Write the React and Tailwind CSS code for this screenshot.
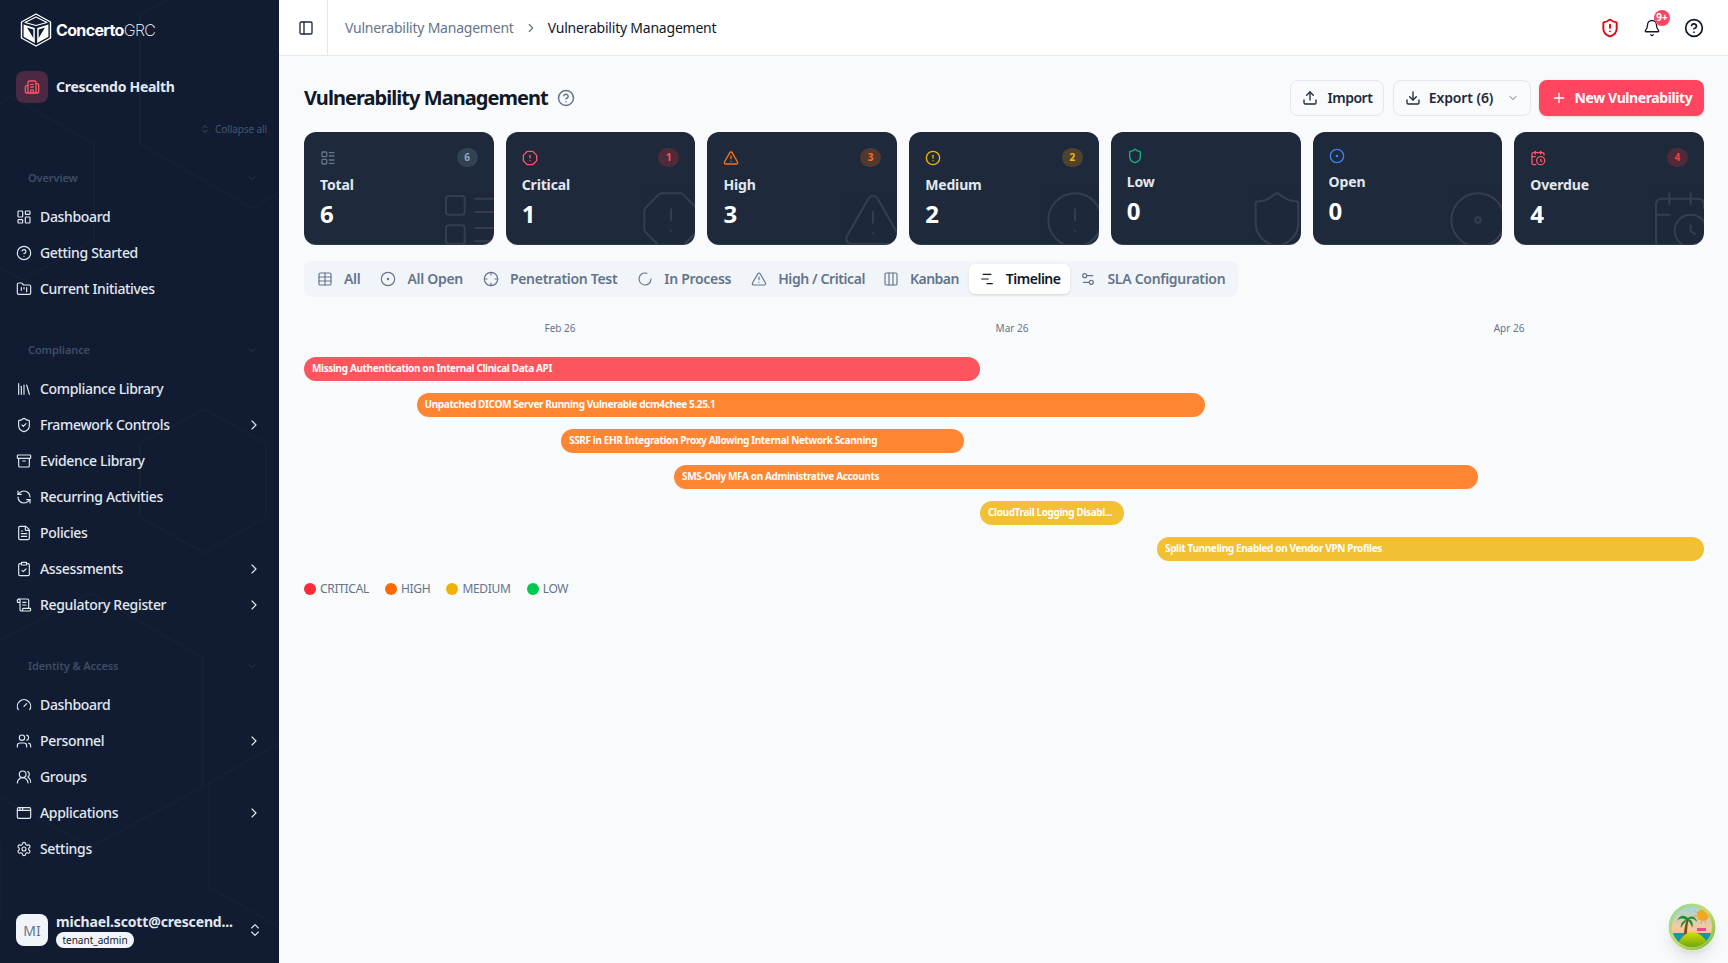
import React from "react";
import {
  LayoutDashboard, CircleHelp, FolderKanban, Library, ShieldCheck, Archive, RefreshCcw, FileText, ClipboardCheck, ScrollText,
  Gauge, Users, UsersRound, AppWindow, Settings, ChevronRight, ChevronDown, ChevronsUpDown, Building2, PanelLeft, ShieldAlert,
  Bell, Upload, Download, Plus, LayoutList, OctagonAlert, TriangleAlert, CircleAlert, Shield, CircleDot, CalendarClock, Table,
  Crosshair, LoaderCircle, Columns3, ChartNoAxesGantt, Settings2,
} from "lucide-react";

const FONT = "font-['Noto_Sans',sans-serif]";

function Logo() {
  return (
    <svg width="32" height="34" viewBox="0 0 32 34" className="shrink-0">
      <path d="M16 1 L30.5 9 V25 L16 33 L1.5 25 V9 Z" fill="none" stroke="#fff" strokeWidth="1.4" strokeLinejoin="round" />
      <path d="M16 4 L27 9.5 L16 12.5 L5 9.5 Z" fill="none" stroke="#fff" strokeWidth="1.1" strokeLinejoin="round" />
      <path d="M3.6 11.5 L14.8 15 L14.8 30 L3.6 23.8 Z" fill="#fff" />
      <path d="M28.4 11.5 L17.2 15 L17.2 30 L28.4 23.8 Z" fill="#fff" />
      <path d="M7 14.5 L13.3 16.6 L13.3 25 Z" fill="#111c33" />
      <path d="M25 14.5 L18.7 16.6 L18.7 25 Z" fill="#111c33" />
    </svg>
  );
}

function Island() {
  return (
    <svg viewBox="0 0 48 48" className="w-full h-full">
      <defs>
        <linearGradient id="sky" x1="0" y1="0" x2="0" y2="1">
          <stop offset="0" stopColor="#8fd8e8" />
          <stop offset="0.55" stopColor="#ffc79a" />
          <stop offset="1" stopColor="#ff9f8a" />
        </linearGradient>
        <linearGradient id="ring" x1="0" y1="0" x2="1" y2="1">
          <stop offset="0" stopColor="#8ed6a0" />
          <stop offset="0.5" stopColor="#c8dc6c" />
          <stop offset="1" stopColor="#6dbb3a" />
        </linearGradient>
        <linearGradient id="hill" x1="0" y1="0" x2="0" y2="1">
          <stop offset="0" stopColor="#d8e000" />
          <stop offset="1" stopColor="#5f9e10" />
        </linearGradient>
        <clipPath id="disc"><circle cx="24" cy="24" r="20" /></clipPath>
      </defs>
      <circle cx="24" cy="24" r="23.5" fill="url(#ring)" />
      <g clipPath="url(#disc)">
        <rect x="0" y="0" width="48" height="48" fill="url(#sky)" />
        <rect x="0" y="30" width="48" height="9" fill="#1597a8" />
        <circle cx="35" cy="12" r="6" fill="#f5a623" />
        <path d="M27 8l3 2M26 13h3M28 18l2-2M33 21l1-3M38 20l-1-2" stroke="#f59b42" strokeWidth="1" />
        <rect x="29" y="25" width="9" height="3" fill="#f0478a" />
        <path d="M16 34 C16 26 17 22 19 16 L21 16 C19 22 19 28 19 34Z" fill="#7a4a1e" />
        <path d="M20 15 C15 11 11 13 9 18 C12 15 15 15 18 17 C14 18 12 22 13 25 C15 21 17 19 20 17 C22 20 24 23 24 25 C26 21 24 17 21 16 C24 15 27 16 29 19 C28 14 24 12 20 15Z" fill="#1f8f2f" />
        <path d="M8 46 C12 33 19 29 24 29 C30 29 38 34 42 46Z" fill="url(#hill)" />
      </g>
    </svg>
  );
}

function SidebarPattern() {
  return (
    <svg className="absolute inset-0 w-full h-full pointer-events-none" viewBox="0 0 279 963" preserveAspectRatio="none" fill="none" stroke="#221f38" strokeWidth="1">
      <path d="M168 0 L140 15 V144 L252 208 L279 193" />
      <path d="M0 104 L10 96 L94 144 V240 L22 280 L0 268" />
      <path d="M204 409 L266 443 V517 L204 553 L140 517 V443 Z" />
      <path d="M0 640 L91 593 L203 658 V787 L90 847 L0 797" />
      <path d="M279 743 L209 783 V887 L279 927" />
      <path d="M0 843 V923" />
    </svg>
  );
}

const nav = [
  { label: "Overview", items: [
    { i: LayoutDashboard, t: "Dashboard" },
    { i: CircleHelp, t: "Getting Started" },
    { i: FolderKanban, t: "Current Initiatives" },
  ]},
  { label: "Compliance", items: [
    { i: Library, t: "Compliance Library" },
    { i: ShieldCheck, t: "Framework Controls", c: true },
    { i: Archive, t: "Evidence Library" },
    { i: RefreshCcw, t: "Recurring Activities" },
    { i: FileText, t: "Policies" },
    { i: ClipboardCheck, t: "Assessments", c: true },
    { i: ScrollText, t: "Regulatory Register", c: true },
  ]},
  { label: "Identity & Access", items: [
    { i: Gauge, t: "Dashboard" },
    { i: Users, t: "Personnel", c: true },
    { i: UsersRound, t: "Groups" },
    { i: AppWindow, t: "Applications", c: true },
    { i: Settings, t: "Settings" },
  ]},
];

function Sidebar() {
  return (
    <aside className="relative w-[279px] shrink-0 h-full bg-[#111c33] flex flex-col overflow-hidden">
      <SidebarPattern />
      <div className="relative flex flex-col h-full">
        <div className="h-[60px] flex items-center pl-[20px] gap-[4px]">
          <Logo />
          <span className="text-white text-[16px] font-['Inter',sans-serif] tracking-[-0.65px]"><span className="font-bold">Concerto</span><span className="font-extralight">GRC</span></span>
        </div>
        <div className="mt-[11px] h-[32px] flex items-center pl-[16px] gap-[8px]">
          <div className="w-[32px] h-[32px] rounded-lg bg-[#4a2a42] flex items-center justify-center">
            <Building2 size={16} className="text-[#fb5565]" />
          </div>
          <span className="text-[#e2e8f0] text-[14px] font-bold tracking-[-0.28px] pb-[2px]">Crescendo Health</span>
        </div>
        <div className="mt-[18px] h-[16px] flex items-center justify-end pr-[12px] gap-[4px] text-[#475569]">
          <ChevronsUpDown size={10} />
          <span className="text-[10px] tracking-[-0.1px] pl-[1px]">Collapse all</span>
        </div>
        <div className="mt-[27px] flex flex-col gap-[29px]">
          {nav.map((s) => (
            <section key={s.label}>
              <div className="h-[28px] mb-[7px] flex items-center justify-between pl-[28px] pr-[21px] text-[#3f4c63]">
                <span className="text-[11px] font-semibold tracking-[-0.1px]">{s.label}</span>
                <ChevronDown size={12} className="text-[#2f3b50]" />
              </div>
              {s.items.map((it) => (
                <div key={it.t + s.label} className="h-[36px] flex items-center pl-[16px] pr-[17px] text-[#e2e8f0]">
                  <it.i size={16} strokeWidth={1.75} className="shrink-0 text-[#e2e8f0]" />
                  <span className="ml-[8px] text-[14px] font-medium tracking-[-0.33px] flex-1 pb-[1px]">{it.t}</span>
                  {it.c && <ChevronRight size={16} strokeWidth={1.75} className="text-[#e2e8f0]" />}
                </div>
              ))}
            </section>
          ))}
        </div>
        <div className="mt-auto pb-[15px] pl-[16px] pr-[16px] flex items-center">
          <div className="w-[32px] h-[32px] rounded-lg bg-[#f1f5f9] flex items-center justify-center text-[#64748b] text-[14px] shrink-0">MI</div>
          <div className="ml-[8px] flex-1 min-w-0 pt-[2px]">
            <div className="text-[#e2e8f0] text-[14px] font-bold leading-[16px] whitespace-nowrap tracking-[-0.15px]">michael.scott@crescend...</div>
            <div className="mt-[2px] w-[78px] h-[16px] rounded-full bg-[#f1f5f9] text-[#111827] text-[10px] leading-[16px] text-center whitespace-nowrap">tenant_admin</div>
          </div>
          <ChevronsUpDown size={16} strokeWidth={1.75} className="text-[#e2e8f0] shrink-0" />
        </div>
      </div>
    </aside>
  );
}

function Header() {
  return (
    <header className="h-[56px] shrink-0 bg-white border-b border-[#e2e8f0] flex items-center">
      <div className="w-[49px] h-full border-r border-[#e2e8f0] flex items-center justify-center">
        <PanelLeft size={16} className="text-[#1e293b] ml-[5px] mr-0" />
      </div>
      <div className="ml-[17px] flex items-center text-[14px] tracking-[-0.22px]">
        <span className="text-[#64748b]">Vulnerability Management</span>
        <ChevronRight size={14} className="text-[#64748b] mx-[10px]" />
        <span className="text-[#0f172a]">Vulnerability Management</span>
      </div>
      <div className="ml-auto flex items-center pr-[24px] text-[#0f172a]">
        <ShieldAlert size={20} strokeWidth={2.25} className="text-[#e7000b]" />
        <div className="relative ml-[23px]">
          <Bell size={18} strokeWidth={1.75} />
          <span className="absolute -top-[9px] left-[11px] w-[16px] h-[16px] rounded-full bg-[#ff4560] text-white text-[10px] font-bold flex items-center justify-center">9+</span>
        </div>
        <CircleHelp size={20} className="ml-[23px]" />
      </div>
    </header>
  );
}

const cards = [
  { t: "Total", v: 6, i: LayoutList, ic: "text-[#64748b]", bb: "bg-[#334155]", bc: "text-[#94a3b8]" },
  { t: "Critical", v: 1, i: OctagonAlert, ic: "text-[#fb5565]", bb: "bg-[#4e2a3a]", bc: "text-[#fb5565]" },
  { t: "High", v: 3, i: TriangleAlert, ic: "text-[#f97316]", bb: "bg-[#51392f]", bc: "text-[#f97316]" },
  { t: "Medium", v: 2, i: CircleAlert, ic: "text-[#f0b100]", bb: "bg-[#4f4230]", bc: "text-[#f5b800]" },
  { t: "Low", v: 0, i: Shield, ic: "text-[#10b981]", nb: true },
  { t: "Open", v: 0, i: CircleDot, ic: "text-[#3b82f6]", nb: true },
  { t: "Overdue", v: 4, i: CalendarClock, ic: "text-[#fb5565]", bb: "bg-[#4e2a3a]", bc: "text-[#ef4444]" },
];

function StatCard({ c }) {
  const I = c.i;
  return (
    <div className="relative overflow-hidden rounded-xl bg-[#1e293b] border-b border-[#475569]/40 h-[113px] px-4 pt-4">
      <I size={64} strokeWidth={0.75} className="absolute -right-2 -bottom-2 text-white opacity-[0.1]" />
      <div className="relative flex items-center justify-between">
        <I size={16} strokeWidth={2} className={c.ic} />
        {!c.nb && <span className={`rounded-full w-[21px] h-[19px] flex items-center justify-center text-[10px] font-bold ${c.bb} ${c.bc}`}>{c.v}</span>}
      </div>
      <div className="relative mt-2 text-[14px] leading-[20px] font-bold text-[#e2e8f0] tracking-[-0.15px]">{c.t}</div>
      <div className="relative mt-[3px] text-[24px] leading-[32px] font-bold text-white">{c.v}</div>
    </div>
  );
}

const tabs = [
  { t: "All", i: Table, w: "tracking-[-0.3px]", p: "px-[10px]" },
  { t: "All Open", i: CircleDot, w: "tracking-[-0.3px]", p: "px-[10px]" },
  { t: "Penetration Test", i: Crosshair, w: "tracking-[-0.3px]", p: "px-[10px]" },
  { t: "In Process", i: LoaderCircle, w: "tracking-[-0.3px]", p: "px-[10px]" },
  { t: "High / Critical", i: TriangleAlert, w: "tracking-[-0.4px]", p: "px-[10px]" },
  { t: "Kanban", i: Columns3, w: "tracking-[-0.55px]", p: "pl-[8px] pr-[10px]" },
  { t: "Timeline", i: ChartNoAxesGantt, a: true, w: "tracking-[-0.5px]", p: "px-[10px]" },
  { t: "SLA Configuration", i: Settings2, w: "tracking-[-0.3px]", p: "px-[10px]" },
];

const T0 = 304;
const bars = [
  { t: "Missing Authentication on Internal Clinical Data API", a: 304, b: 980, c: "bg-[#fb2c36]/80" },
  { t: "Unpatched DICOM Server Running Vulnerable dcm4chee 5.25.1", a: 416.5, b: 1205, c: "bg-[#ff6900]/80" },
  { t: "SSRF in EHR Integration Proxy Allowing Internal Network Scanning", a: 561, b: 964, c: "bg-[#ff6900]/80" },
  { t: "SMS-Only MFA on Administrative Accounts", a: 674, b: 1478, c: "bg-[#ff6900]/80" },
  { t: "CloudTrail Logging Disabl...", a: 980, b: 1124, c: "bg-[#f0b100]/80" },
  { t: "Split Tunneling Enabled on Vendor VPN Profiles", a: 1157, b: 1704, c: "bg-[#f0b100]/80" },
];
const dates = [{ t: "Feb 26", x: 560 }, { t: "Mar 26", x: 1012 }, { t: "Apr 26", x: 1509 }];
const legend = [
  { t: "CRITICAL", c: "bg-[#fb2c36]" },
  { t: "HIGH", c: "bg-[#ff6900]" },
  { t: "MEDIUM", c: "bg-[#f0b100]" },
  { t: "LOW", c: "bg-[#00c950]" },
];

function Timeline() {
  return (
    <div className="mt-[16px]">
      <div className="relative h-[28px]">
        {dates.map((d) => (
          <span key={d.t} className="absolute top-[7px] -translate-x-1/2 text-[10px] leading-[16px] text-[#64748b]" style={{ left: d.x - T0 }}>{d.t}</span>
        ))}
      </div>
      <div className="mt-[16px] flex flex-col gap-[12px]">
        {bars.map((b) => (
          <div key={b.t} className="h-[24px]">
            <div className={`h-[24px] rounded-full px-2 flex items-center overflow-hidden ${b.c}`} style={{ marginLeft: b.a - T0, width: b.b - b.a }}>
              <span className="whitespace-nowrap text-white text-[10px] font-bold tracking-[-0.37px] pb-[1px]">{b.t}</span>
            </div>
          </div>
        ))}
      </div>
      <div className="mt-[20px] flex items-center gap-[16px]">
        {legend.map((l) => (
          <div key={l.t} className="flex items-center gap-[4px]">
            <span className={`w-[12px] h-[12px] rounded-full ${l.c}`} />
            <span className="text-[12px] leading-[16px] text-[#64748b] tracking-[-0.3px]">{l.t}</span>
          </div>
        ))}
      </div>
    </div>
  );
}

export default function App() {
  return (
    <div className={`w-[1728px] h-[963px] flex overflow-hidden bg-[#f8fafc] ${FONT}`}>
      <Sidebar />
      <main className="relative flex-1 min-w-0 flex flex-col">
        <Header />
        <div className="pl-[25px] pr-[24px] pt-[24px]">
          <div className="flex items-center h-[36px]">
            <h1 className="text-[20px] font-bold text-[#111827] tracking-[-0.95px]">Vulnerability Management</h1>
            <CircleHelp size={18} className="ml-[9px] text-[#64748b]" />
            <div className="ml-auto flex items-center">
              <button className="h-[36px] w-[94px] rounded-lg border border-[#e2e8f0] bg-[#f8fafc] flex items-center justify-center gap-[10px] text-[14px] font-semibold text-[#1e293b] tracking-[-0.5px] pb-[1px]">
                <Upload size={16} className="mt-[1px]" />Import
              </button>
              <button className="ml-[9px] h-[36px] w-[138px] rounded-lg border border-[#e2e8f0] bg-[#f8fafc] flex items-center justify-center gap-[8px] text-[14px] font-semibold text-[#1e293b] tracking-[-0.1px] pb-[1px]">
                <Download size={16} className="mt-[1px]" />Export (6)<ChevronDown size={12} className="ml-[6px] mt-[1px] text-[#64748b]" />
              </button>
              <button className="ml-[8px] h-[36px] w-[165px] rounded-lg bg-[#ff4560] flex items-center justify-center gap-[8px] text-[14px] font-bold text-white shadow-sm tracking-[-0.4px] pb-[1px]">
                <Plus size={16} className="mt-[1px]" />New Vulnerability
              </button>
            </div>
          </div>
          <div className="mt-[16px] grid grid-cols-7 gap-[12px]">
            {cards.map((c) => <StatCard key={c.t} c={c} />)}
          </div>
          <div className="mt-[16px] w-fit h-[36px] rounded-lg bg-[#f1f5f9] p-[3px] flex items-stretch">
            {tabs.map((t) => (
              <div key={t.t} className={`flex items-center gap-[11px] ${t.p} rounded-md text-[14px] font-semibold ${t.a ? "bg-white text-[#0f172a] shadow-sm" : "text-[#64748b]"}`}>
                <t.i size={16} strokeWidth={1.75} />
                <span className={`pb-[1px] ${t.w}`}>{t.t}</span>
              </div>
            ))}
          </div>
          <Timeline />
        </div>
        <div className="absolute right-[12px] bottom-[12px] w-[48px] h-[48px] rounded-full shadow-lg">
          <Island />
        </div>
      </main>
    </div>
  );
}
